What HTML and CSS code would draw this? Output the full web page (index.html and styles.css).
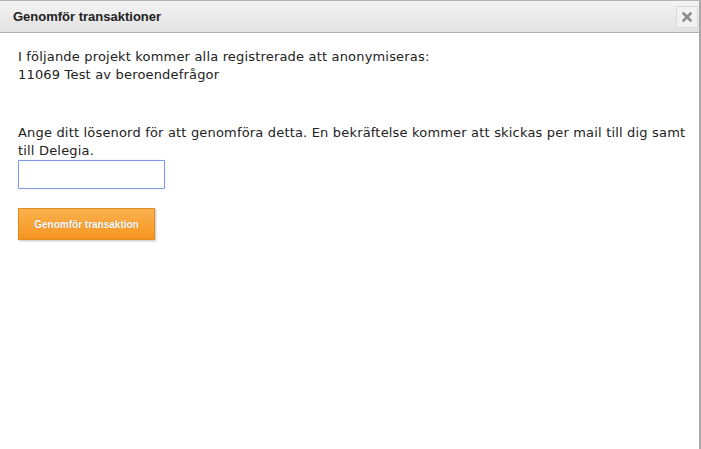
FILE: index.html
```html
<!DOCTYPE html>
<html lang="sv">
<head>
    <meta charset="UTF-8">
    <title>Genomför transaktioner</title>
    <link rel="stylesheet" href="styles.css">
</head>
<body>
    <div class="dialog">
        <div class="dialog-header">
            <span class="dialog-title">Genomför transaktioner</span>
            <span class="dialog-close">
                <svg width="10" height="10" viewBox="0 0 10 10"><path d="M1.5 1.5 L8.5 8.5 M8.5 1.5 L1.5 8.5" stroke="#8c8c8c" stroke-width="2.6" stroke-linecap="square"/></svg>
            </span>
        </div>
        <div class="dialog-body">
            <p class="intro">I följande projekt kommer alla registrerade att anonymiseras:<br>11069 Test av beroendefrågor</p>
            <p class="info">Ange ditt lösenord för att genomföra detta. En bekräftelse kommer att skickas per mail till dig samt till Delegia.</p>
            <input type="password" class="password">
            <button class="submit">Genomför transaktion</button>
        </div>
    </div>
</body>
</html>
```

FILE: styles.css
```css
body {
    margin: 0;
    background: #ffffff;
    font-family: Verdana, 'DejaVu Sans', sans-serif;
    color: #222;
}

.dialog {
    height: 449px;
    box-sizing: border-box;
    border-top: 1px solid #b4b4b4;
    border-right: 2px solid #a9a9a9;
    background: #ffffff;
}

.dialog-header {
    height: 31px;
    display: flex;
    align-items: center;
    justify-content: space-between;
    padding: 0 1px 0 13px;
    background: linear-gradient(#f4f4f4, #e2e2e2);
    border-bottom: 1px solid #b0b0b0;
}

.dialog-title {
    font-family: 'Liberation Sans', Arial, sans-serif;
    font-weight: bold;
    font-size: 13px;
    color: #222;
}

.dialog-close {
    width: 20px;
    height: 20px;
    display: flex;
    align-items: center;
    justify-content: center;
    border: 1px solid #d8d8d8;
    background: #f2f2f2;
}

.dialog-body {
    padding: 15px 8px 12px 18px;
}

.intro, .info {
    margin: 0;
    font-size: 13px;
    line-height: 18px;
    letter-spacing: 0.18px;
}

.info {
    margin-top: 40px;
}

.password {
    display: block;
    width: 147px;
    height: 29px;
    box-sizing: border-box;
    margin: 0;
    border: 1px solid #7f9ae6;
    border-radius: 1px;
    box-shadow: 0 0 1px #9fb3f0;
    outline: none;
}

.submit {
    display: block;
    margin-top: 19px;
    width: 137px;
    height: 32px;
    border: 1px solid #e08c25;
    background: linear-gradient(#fbb24f, #f7951f);
    box-shadow: 1px 1px 2px rgba(0, 0, 0, 0.25);
    color: #ffffff;
    font-family: 'Liberation Sans', Arial, sans-serif;
    font-weight: bold;
    font-size: 10px;
    text-shadow: 0 0 1px rgba(0, 0, 0, 0.3);
    cursor: pointer;
}
```
